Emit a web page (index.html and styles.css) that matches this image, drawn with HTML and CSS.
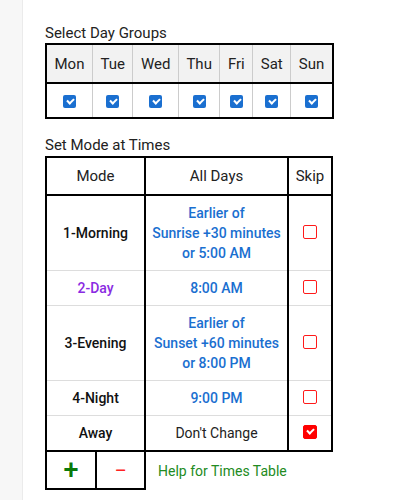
FILE: index.html
```html
<!DOCTYPE html>
<html>
<head>
<meta charset="utf-8">
<link rel="stylesheet" href="styles.css">
</head>
<body>
<div class="page">
  <div class="sidebar"></div>
  <div class="content">
    <div class="title">Select Day Groups</div>
    <table class="days">
      <tr><th>Mon</th><th>Tue</th><th>Wed</th><th>Thu</th><th>Fri</th><th>Sat</th><th>Sun</th></tr>
      <tr>
        <td><span class="cb blue"></span></td>
        <td><span class="cb blue"></span></td>
        <td><span class="cb blue"></span></td>
        <td><span class="cb blue"></span></td>
        <td><span class="cb blue"></span></td>
        <td><span class="cb blue"></span></td>
        <td><span class="cb blue"></span></td>
      </tr>
    </table>

    <div class="title title2">Set Mode at Times</div>
    <table class="times">
      <colgroup><col class="c-mode"><col class="c-time"><col class="c-skip"></colgroup>
      <tr><th>Mode</th><th>All Days</th><th>Skip</th></tr>
      <tr>
        <td class="mode">1-Morning</td>
        <td class="time">Earlier of<br>Sunrise +30 minutes<br>or 5:00 AM</td>
        <td><span class="cb red"></span></td>
      </tr>
      <tr>
        <td class="mode purple">2-Day</td>
        <td class="time">8:00 AM</td>
        <td><span class="cb red"></span></td>
      </tr>
      <tr>
        <td class="mode">3-Evening</td>
        <td class="time">Earlier of<br>Sunset +60 minutes<br>or 8:00 PM</td>
        <td><span class="cb red"></span></td>
      </tr>
      <tr>
        <td class="mode">4-Night</td>
        <td class="time">9:00 PM</td>
        <td><span class="cb red"></span></td>
      </tr>
      <tr>
        <td class="mode">Away</td>
        <td class="plain">Don't Change</td>
        <td><span class="cb red checked"></span></td>
      </tr>
    </table>
    <div class="foot">
      <div class="btns">
        <div class="btn plus">+</div>
        <div class="btn minus">&minus;</div>
      </div>
      <div class="help">Help for Times Table</div>
    </div>
  </div>
</div>
</body>
</html>
```

FILE: styles.css
```css
html, body {
  margin: 0;
  background: #fff;
  font-family: Roboto, "Noto Sans", sans-serif;
  color: #222;
}
.page {
  display: flex;
  min-height: 500px;
}
.sidebar {
  width: 22px;
  background: #f7f7f7;
  border-right: 1px solid #ebebeb;
}
.content {
  padding: 24px 0 0 22px;
}
.title {
  font-size: 15px;
  line-height: 18px;
  margin: 0 0 1px;
  color: #222;
}
.title2 {
  margin-top: 17px;
  margin-bottom: 2px;
}
.days {
  border-collapse: collapse;
  border: 2px solid #000;
}
.days th {
  background: #f2f2f2;
  font-weight: 400;
  font-size: 15px;
  height: 37px;
  padding: 0 7.5px;
  border-left: 1px solid #ccc;
  border-bottom: 2px solid #000;
}
.days td {
  height: 33px;
  padding: 0;
  text-align: center;
  border-left: 1px solid #ccc;
}
.cb {
  display: inline-block;
  width: 13px;
  height: 13px;
  box-sizing: border-box;
  border-radius: 2px;
  position: relative;
  vertical-align: middle;
}
.cb.blue {
  background: #1a6fd0;
}
.cb.red {
  border: 1.5px solid #ff1a1a;
  background: #fff;
  width: 14px;
  height: 14px;
  top: -2px;
}
.cb.red.checked {
  background: #f00;
  border-color: #f00;
}
.cb.blue::after, .cb.checked::after {
  content: "";
  position: absolute;
  left: 4px;
  top: 3px;
  width: 5px;
  height: 3px;
  border-left: 2px solid #fff;
  border-bottom: 2px solid #fff;
  transform: rotate(-45deg);
}
.cb.checked::after {
  left: 2.5px;
  top: 1.5px;
}
.times {
  border-collapse: collapse;
  border: 2px solid #000;
  table-layout: fixed;
  width: 286px;
}
.c-mode { width: 99px; }
.c-time { width: 143px; }
.c-skip { width: 44px; }
.times th {
  font-weight: 400;
  font-size: 15px;
  height: 36px;
  padding: 0;
  border-left: 2px solid #000;
  border-bottom: 2px solid #000;
}
.times td {
  font-size: 14px;
  line-height: 20px;
  padding: 7px 2px;
  text-align: center;
  border-left: 2px solid #000;
  border-top: 1px solid #ddd;
}
.times td.mode {
  font-weight: 500;
  color: #111;
}
.times td.purple {
  color: #8a2be2;
}
.times td.time {
  font-weight: 500;
  color: #1a6fd0;
}
.times td.plain {
  color: #222;
}
.foot {
  display: flex;
  align-items: center;
}
.btns {
  display: flex;
  border: 2px solid #000;
  border-top: 0;
}
.btn {
  height: 36px;
  display: flex;
  align-items: center;
  justify-content: center;
}
.plus {
  width: 48px;
  color: #0a7a0a;
  font-size: 27px;
  font-weight: 500;
}
.minus {
  width: 47px;
  border-left: 2px solid #000;
  color: #f22;
  font-size: 22px;
}
.help {
  margin-left: 12px;
  font-size: 14px;
  color: #228b22;
}
```
